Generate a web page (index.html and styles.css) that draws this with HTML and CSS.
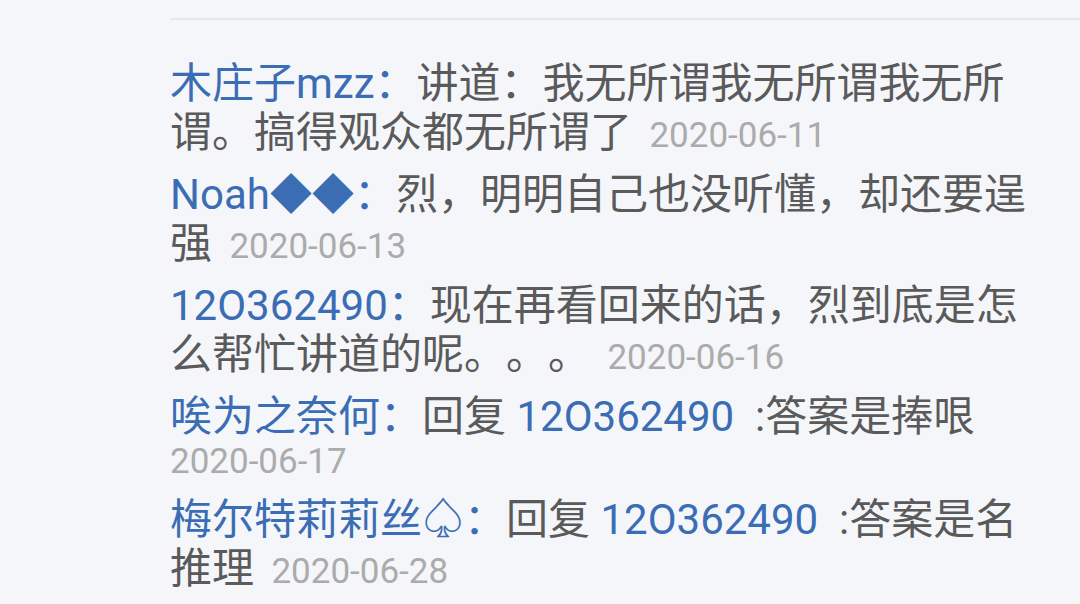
FILE: index.html
```html
<!DOCTYPE html>
<html lang="zh-CN">
<head>
<meta charset="utf-8">
<title>评论</title>
<link rel="stylesheet" href="styles.css">
</head>
<body>
<div class="page">
  <div class="divider"></div>
  <div class="comments">
    <p class="comment"><span class="name">木庄子mzz：</span><span class="text">讲道：我无所谓我无所谓我无所谓。搞得观众都无所谓了</span>&nbsp; <span class="date">2020-06-11</span></p>
    <p class="comment"><span class="name">Noah◆◆：</span><span class="text">烈，明明自己也没听懂，却还要逞强</span>&nbsp; <span class="date">2020-06-13</span></p>
    <p class="comment"><span class="name">12O362490：</span><span class="text">现在再看回来的话，烈到底是怎么帮忙讲道的呢。。。</span>&nbsp; <span class="date">2020-06-16</span></p>
    <p class="comment"><span class="name">唉为之奈何：</span><span class="text">回复 </span><span class="name">12O362490</span><span class="text">&nbsp; :答案是捧哏</span>&nbsp; <span class="date">2020-06-17</span></p>
    <p class="comment"><span class="name">梅尔特莉莉丝♤：</span><span class="text">回复 </span><span class="name">12O362490</span><span class="text">&nbsp; :答案是名推理</span>&nbsp; <span class="date">2020-06-28</span></p>
  </div>
</div>
</body>
</html>
```
FILE: styles.css
```css
html, body {
  margin: 0;
  padding: 0;
  background: #f5f6fa;
}
.page {
  width: 1080px;
  height: 604px;
  overflow: hidden;
  font-family: Roboto, "Noto Sans CJK SC", sans-serif;
  text-spacing-trim: space-all;
}
.divider {
  margin: 18px 0 0 170px;
  height: 2px;
  background: #e6e7ec;
}
.comments {
  display: flex;
  flex-direction: column;
  gap: 13px;
  padding: 39px 0 0 170px;
  width: 860px;
}
.comment {
  margin: 0;
  font-size: 35px;
  line-height: 41px;
  color: #5a5a5a;
}
.name {
  font-size: 42px;
  line-height: 49px;
  color: #3a6db4;
}
.text {
  font-size: 42px;
  line-height: 49px;
  color: #5a5a5a;
}
.date {
  font-size: 35px;
  color: #ababab;
}
```
